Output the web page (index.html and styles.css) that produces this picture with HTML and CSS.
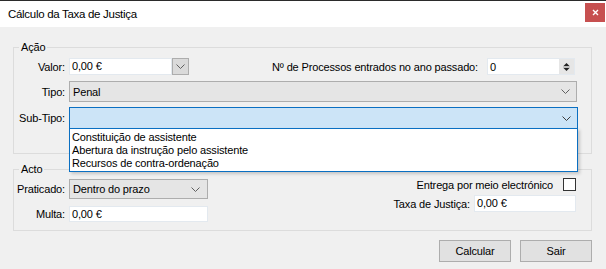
FILE: index.html
```
<!DOCTYPE html>
<html lang="pt">
<head>
<meta charset="utf-8">
<title>Cálculo da Taxa de Justiça</title>
<link rel="stylesheet" href="styles.css">
</head>
<body>
<div class="window">
  <div class="titlebar">
    <span class="title">Cálculo da Taxa de Justiça</span>
    <span class="close"><svg width="7" height="7" viewBox="0 0 7 7"><path d="M1 1L6 6M6 1L1 6" stroke="#fff" stroke-width="1.4"/></svg></span>
  </div>
  <div class="content">
    <fieldset class="group group-accao">
      <legend>Ação</legend>
      <div class="row row-valor">
        <span class="lbl">Valor:</span>
        <div class="edit edit-valor">0,00 €</div>
        <div class="dd-btn"><svg width="9" height="5" viewBox="0 0 9 5"><path d="M0.5 0.5L4.5 4.5L8.5 0.5" fill="none" stroke="#606060"/></svg></div>
        <span class="lbl-proc">Nº de Processos entrados no ano passado:</span>
        <div class="spin">
          <span class="spin-val">0</span>
          <span class="spin-btns">
            <svg width="9" height="12" viewBox="0 0 9 12"><path d="M4.5 2L7.5 5H1.5Z" fill="#222"/><path d="M4.5 10L7.5 7H1.5Z" fill="#222"/><path d="M1 6H8" stroke="#999"/></svg>
          </span>
        </div>
      </div>
      <div class="row row-tipo">
        <span class="lbl">Tipo:</span>
        <div class="combo combo-wide">
          <span class="combo-text">Penal</span>
          <svg width="9" height="5" viewBox="0 0 9 5"><path d="M0.5 0.5L4.5 4.5L8.5 0.5" fill="none" stroke="#606060"/></svg>
        </div>
      </div>
      <div class="row row-subtipo">
        <span class="lbl">Sub-Tipo:</span>
        <div class="combo combo-wide combo-open">
          <span class="combo-text"></span>
          <svg width="9" height="5" viewBox="0 0 9 5"><path d="M0.5 0.5L4.5 4.5L8.5 0.5" fill="none" stroke="#3c3c3c"/></svg>
          <ul class="dropdown">
            <li>Constituição de assistente</li>
            <li>Abertura da instrução pelo assistente</li>
            <li>Recursos de contra-ordenação</li>
          </ul>
        </div>
      </div>
    </fieldset>

    <fieldset class="group group-acto">
      <legend>Acto</legend>
      <div class="acto-cols">
        <div class="acto-left">
          <div class="row row-praticado">
            <span class="lbl">Praticado:</span>
            <div class="combo combo-short">
              <span class="combo-text">Dentro do prazo</span>
              <svg width="9" height="5" viewBox="0 0 9 5"><path d="M0.5 0.5L4.5 4.5L8.5 0.5" fill="none" stroke="#606060"/></svg>
            </div>
          </div>
          <div class="row row-multa">
            <span class="lbl">Multa:</span>
            <div class="edit edit-short">0,00 €</div>
          </div>
        </div>
        <div class="acto-right">
          <div class="row row-entrega">
            <span class="lbl-r">Entrega por meio electrónico</span>
            <span class="checkbox"></span>
          </div>
          <div class="row row-taxa">
            <span class="lbl-r">Taxa de Justiça:</span>
            <div class="edit edit-taxa">0,00 €</div>
          </div>
        </div>
      </div>
    </fieldset>

    <div class="buttons">
      <button class="btn">Calcular</button>
      <button class="btn">Sair</button>
    </div>
  </div>
</div>
</body>
</html>
```

FILE: styles.css
```
html, body { margin: 0; padding: 0; }
body { font-family: "Liberation Sans", Arial, sans-serif; font-size: 11px; letter-spacing: -0.15px; color: #000; background: #f0f0f0; }

.window { width: 606px; height: 269px; background: #f0f0f0; overflow: hidden; }

.titlebar { height: 26px; background: #fff; border-top: 1px solid #2b2b2b; display: flex; align-items: center; justify-content: space-between; }
.title { font-size: 11.5px; letter-spacing: -0.3px; padding-left: 8px; margin-top: -1px; }
.close { width: 20px; height: 19px; background: #c75050; margin-right: 1px; margin-top: -3px; display: flex; align-items: center; justify-content: center; }

.content { padding: 13px 14px 0 13px; }

.group { margin: 0; padding: 0; border: 1px solid #dcdcdc; min-width: 0; }
.group legend { margin-left: 5px; padding: 0 2px; font-size: 11px; line-height: 14px; }

.group-accao { padding: 4px 0 24px 0; }
.group-acto { margin-top: 8px; padding: 3px 0 8px 0; }

.row { display: flex; align-items: center; }
.lbl { width: 51px; margin-right: 4px; text-align: right; white-space: nowrap; }

.edit { background: #fff; border: 1px solid #e3e9ef; box-sizing: border-box; padding-left: 2px; height: 17px; line-height: 15px; }
.edit-valor { width: 103px; }
.dd-btn { width: 17px; height: 17px; box-sizing: border-box; background: #dadada; border: 1px solid #adadad; display: flex; align-items: center; justify-content: center; }

.row-valor { height: 17px; }
.lbl-proc { margin-left: auto; margin-right: 9px; white-space: nowrap; }
.spin { width: 88px; height: 17px; box-sizing: border-box; background: #fff; border: 1px solid #e3e9ef; display: flex; align-items: center; margin-right: 16px; }
.spin-val { flex: 1; padding-left: 2px; }
.spin-btns { width: 15px; height: 15px; background: #e6e6e6; display: flex; align-items: center; justify-content: center; }

.combo { position: relative; box-sizing: border-box; background: #e5e5e5; border: 1px solid #adadad; display: flex; align-items: center; justify-content: space-between; padding: 0 6px 0 3px; }
.combo-wide { width: 508px; height: 21px; }
.row-tipo { margin-top: 6px; }
.row-subtipo { margin-top: 5px; }
.row-subtipo .combo { height: 22px; width: 509px; }
.combo-open { background: #cce4f7; border-color: #0a6fc2; }

.dropdown { position: absolute; left: -1px; top: 20px; width: 509px; box-sizing: border-box; margin: 0; padding: 2px 2px 1px; list-style: none; background: #fff; border: 1px solid #0a6fc2; box-shadow: 2px 2px 3px rgba(0,0,0,0.18); z-index: 2; }
.dropdown li { line-height: 13px; white-space: nowrap; }

.acto-cols { display: flex; justify-content: space-between; }
.combo-short { width: 139px; height: 20px; padding-right: 7px; }
.row-multa { margin-top: 7px; }
.edit-short { width: 139px; height: 16px; line-height: 14px; }

.acto-right { margin-right: 15px; margin-top: -1px; }
.row-entrega { justify-content: flex-end; height: 13px; }
.checkbox { width: 13px; height: 13px; box-sizing: border-box; border: 1px solid #333; background: #fff; margin-left: 10px; }
.row-taxa { justify-content: flex-end; margin-top: 4px; }
.lbl-r { white-space: nowrap; }
.row-taxa .lbl-r { margin-right: 4px; }
.edit-taxa { width: 102px; height: 17px; }

.buttons { display: flex; justify-content: flex-end; gap: 9px; margin-top: 9px; }
.btn { width: 72px; height: 22px; font-family: inherit; font-size: 11px; letter-spacing: inherit; background: #e1e1e1; border: 1px solid #adadad; padding: 0; color: #000; }
```
